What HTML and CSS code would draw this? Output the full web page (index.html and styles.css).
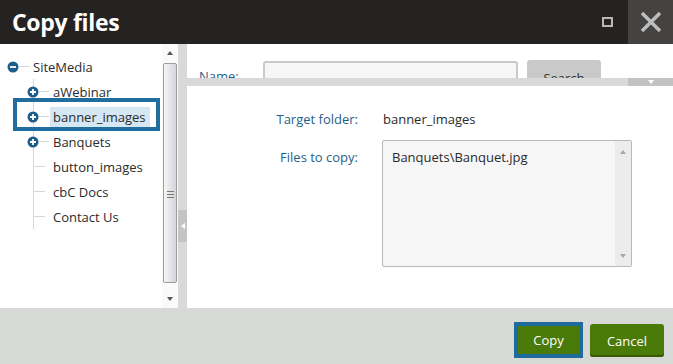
FILE: index.html
```html
<!DOCTYPE html>
<html lang="en">
<head>
    <meta charset="UTF-8">
    <meta name="viewport" content="width=device-width, initial-scale=1.0">
    <title>Copy files</title>
    <link rel="stylesheet" href="styles.css">
</head>
<body>

    <div class="dialog">
        <div class="titlebar">
            <h1 class="title">Copy files</h1>
            <div class="title-actions">
                <span class="btn-maximize"></span>
                <span class="btn-close">
                    <svg width="22" height="22" viewBox="0 0 22 22">
                        <path d="M2 2 L20 20 M20 2 L2 20" stroke="#bdbdbd" stroke-width="3.5" fill="none"/>
                    </svg>
                </span>
            </div>
        </div>

        <div class="main">
            <!-- albero cartelle -->
            <div class="tree-pane">
                <div class="tree">
                    <div class="node root">
                        <svg class="toggle" width="12" height="12" viewBox="0 0 12 12">
                            <circle cx="6" cy="6" r="5.5" fill="#1c5d8a"/>
                            <path d="M3 6 H9" stroke="#fff" stroke-width="1.8"/>
                        </svg>
                        <span class="tick"></span>
                        <span class="label">SiteMedia</span>
                    </div>
                    <div class="children">
                        <div class="node">
                            <svg class="toggle" width="12" height="12" viewBox="0 0 12 12">
                                <circle cx="6" cy="6" r="5.5" fill="#1c5d8a"/>
                                <path d="M3 6 H9 M6 3 V9" stroke="#fff" stroke-width="1.8"/>
                            </svg>
                            <span class="tick"></span>
                            <span class="label">aWebinar</span>
                        </div>
                        <div class="node focused">
                            <svg class="toggle" width="12" height="12" viewBox="0 0 12 12">
                                <circle cx="6" cy="6" r="5.5" fill="#1c5d8a"/>
                                <path d="M3 6 H9 M6 3 V9" stroke="#fff" stroke-width="1.8"/>
                            </svg>
                            <span class="tick"></span>
                            <span class="label selected">banner_images</span>
                        </div>
                        <div class="node">
                            <svg class="toggle" width="12" height="12" viewBox="0 0 12 12">
                                <circle cx="6" cy="6" r="5.5" fill="#1c5d8a"/>
                                <path d="M3 6 H9 M6 3 V9" stroke="#fff" stroke-width="1.8"/>
                            </svg>
                            <span class="tick"></span>
                            <span class="label">Banquets</span>
                        </div>
                        <div class="node leaf">
                            <span class="tick"></span>
                            <span class="label">button_images</span>
                        </div>
                        <div class="node leaf">
                            <span class="tick"></span>
                            <span class="label">cbC Docs</span>
                        </div>
                        <div class="node leaf">
                            <span class="tick"></span>
                            <span class="label">Contact Us</span>
                        </div>
                    </div>
                </div>
                <div class="scrollbar">
                    <div class="sb-arrow"><span class="arrow-up"></span></div>
                    <div class="sb-thumb"><span class="grip"></span></div>
                    <div class="sb-space"></div>
                    <div class="sb-arrow"><span class="arrow-down"></span></div>
                </div>
            </div>

            <div class="splitter"><span class="splitter-handle"></span></div>

            <!-- pannello destro -->
            <div class="content-pane">
                <div class="search-row">
                    <span class="field-label name-label">Name:</span>
                    <span class="search-input"></span>
                    <span class="search-btn">Search</span>
                </div>
                <div class="collapse-bar">
                    <span class="collapse-fill"></span>
                    <span class="collapse-toggle"><span class="arrow-down white"></span></span>
                </div>
                <div class="form">
                    <span class="field-label">Target folder:</span>
                    <span class="field-value">banner_images</span>
                    <span class="field-label files-label">Files to copy:</span>
                    <div class="file-list">
                        <div class="file-list-text">Banquets\Banquet.jpg</div>
                        <div class="file-list-bar">
                            <span class="arrow-up light"></span>
                            <span class="arrow-down light"></span>
                        </div>
                    </div>
                </div>
            </div>
        </div>

        <div class="footer">
            <button class="btn btn-copy">Copy</button>
            <button class="btn btn-cancel">Cancel</button>
        </div>
    </div>

</body>
</html>
```

FILE: styles.css
```css
body {
    margin: 0;
    padding: 0;
    font-family: "Open Sans", "Noto Sans", sans-serif;
    font-size: 13px;
    color: #2b2b2b;
    background-color: #fff;
}
.dialog {
    width: 673px;
    height: 364px;
    display: flex;
    flex-direction: column;
    overflow: hidden;
}

/* barra del titolo */
.titlebar {
    height: 44px;
    background-color: #252321;
    display: flex;
    align-items: center;
    justify-content: space-between;
    flex-shrink: 0;
}
.title {
    margin: 0 0 0 12px;
    font-size: 23px;
    font-weight: bold;
    color: #fff;
    letter-spacing: -0.3px;
}
.title-actions {
    display: flex;
    align-items: center;
    height: 100%;
}
.btn-maximize {
    width: 7px;
    height: 6px;
    border: 2px solid #b8b8b8;
    margin-right: 15px;
}
.btn-close {
    width: 45px;
    height: 100%;
    background-color: #444342;
    display: flex;
    align-items: center;
    justify-content: center;
}

.main {
    height: 264px;
    display: flex;
    flex-shrink: 0;
}

/* albero */
.tree-pane {
    width: 178px;
    display: flex;
    background-color: #fff;
}
.tree {
    width: 162px;
    padding-top: 10px;
}
.node {
    height: 25px;
    display: flex;
    align-items: center;
    white-space: nowrap;
}
.node.root {
    padding-left: 7px;
}
.toggle {
    flex-shrink: 0;
}
.tick {
    width: 10px;
    height: 1px;
    background-color: #d6d6d6;
    margin-right: 4px;
}
.children {
    background: linear-gradient(#d6d6d6, #d6d6d6) no-repeat 33px 0 / 1px 100%;
}
.children .node {
    padding-left: 27px;
}
.children .node.leaf {
    padding-left: 33px;
}
.node.leaf .tick {
    width: 12px;
    margin-right: 8px;
}
.label.selected {
    background-color: #d4e7f3;
    padding: 0 4px 0 3px;
    margin-left: -3px;
    line-height: 20px;
}
.node.focused {
    position: relative;
}
.node.focused::after {
    content: "";
    position: absolute;
    left: 13px;
    right: 2px;
    top: -6px;
    bottom: -2px;
    border: 4px solid #1f6e9e;
}

.scrollbar {
    width: 16px;
    background-color: #fafafa;
    display: flex;
    flex-direction: column;
}
.sb-arrow {
    height: 18px;
    display: flex;
    align-items: center;
    justify-content: center;
}
.sb-thumb {
    height: 218px;
    margin: 1px 1px 0 1px;
    border: 1px solid #9c9c9c;
    border-radius: 2px;
    background: linear-gradient(to right, #f6f6f6, #d4d4da);
    display: flex;
    justify-content: center;
}
.grip {
    margin-top: 127px;
    width: 7px;
    height: 5px;
    border-top: 1px solid #777;
    border-bottom: 1px solid #777;
    background: linear-gradient(#777, #777) no-repeat 0 2px / 100% 1px;
}
.sb-space {
    flex: 1;
}
.arrow-up {
    width: 0;
    height: 0;
    border-left: 3.5px solid transparent;
    border-right: 3.5px solid transparent;
    border-bottom: 4px solid #555;
}
.arrow-down {
    width: 0;
    height: 0;
    border-left: 3.5px solid transparent;
    border-right: 3.5px solid transparent;
    border-top: 4px solid #555;
}
.arrow-up.light {
    border-bottom-color: #a8a8a8;
}
.arrow-down.light {
    border-top-color: #a8a8a8;
}
.arrow-down.white {
    border-top-color: #fff;
}

.splitter {
    width: 9px;
    background-color: #d9d9d9;
    display: flex;
    align-items: flex-start;
}
.splitter-handle {
    margin-top: 166px;
    width: 9px;
    height: 32px;
    background-color: #c4c4c4;
    display: flex;
    align-items: center;
    justify-content: center;
}
.splitter-handle::before {
    content: "";
    border-top: 3px solid transparent;
    border-bottom: 3px solid transparent;
    border-right: 4px solid #fff;
}

/* pannello destro */
.content-pane {
    flex: 1;
    background-color: #fff;
    display: flex;
    flex-direction: column;
}
.search-row {
    height: 34px;
    overflow: hidden;
    display: flex;
    align-items: flex-start;
    padding-left: 12px;
    box-sizing: border-box;
}
.field-label {
    color: #1f5f8c;
    line-height: 20px;
}
.name-label {
    margin-top: 22px;
    width: 64px;
}
.search-input {
    margin-top: 17px;
    width: 251px;
    height: 28px;
    border: 2px solid #c9c9c9;
    border-radius: 3px;
    background-color: #f6f6f6;
}
.search-btn {
    margin: 16px 0 0 9px;
    width: 74px;
    height: 30px;
    border-radius: 3px;
    background-color: #c9c9c9;
    color: #333;
    text-align: center;
    line-height: 28px;
    padding-top: 4px;
    box-sizing: border-box;
}
.collapse-bar {
    height: 8px;
    display: flex;
}
.collapse-fill {
    flex: 1;
    background-color: #d9d9d9;
}
.collapse-toggle {
    width: 45px;
    background-color: #c2c2c2;
    display: flex;
    align-items: center;
    justify-content: center;
}

.form {
    display: grid;
    grid-template-columns: 171px 250px;
    column-gap: 24px;
    row-gap: 11px;
    padding-top: 23px;
}
.form .field-label {
    text-align: right;
}
.field-value {
    line-height: 20px;
    padding-left: 1px;
}
.files-label {
    padding-top: 7px;
}
.file-list {
    height: 127px;
    box-sizing: border-box;
    border: 1px solid #b9b9b9;
    border-radius: 2px;
    background-color: #f6f6f6;
    display: flex;
}
.file-list-text {
    flex: 1;
    padding: 6px 0 0 9px;
    line-height: 20px;
}
.file-list-bar {
    width: 16px;
    background-color: #ececec;
    display: flex;
    flex-direction: column;
    align-items: center;
    justify-content: space-between;
    padding: 9px 0 8px;
}

/* piede */
.footer {
    flex: 1;
    background-color: #d7d9d6;
    display: flex;
    justify-content: flex-end;
    align-items: flex-start;
    padding: 14px 9px 0 0;
}
.btn {
    font-family: "Open Sans", "Noto Sans", sans-serif;
    font-size: 13px;
    color: #fff;
    cursor: pointer;
    padding: 0;
}
.btn-copy {
    width: 69px;
    height: 36px;
    background-color: #497a0a;
    border: 4px solid #1e6b9c;
}
.btn-cancel {
    margin: 2px 0 0 7px;
    width: 74px;
    height: 33px;
    background-color: #4a7a07;
    border: none;
    border-radius: 3px;
    box-shadow: inset 0 -2px 0 #375b04;
}
```
